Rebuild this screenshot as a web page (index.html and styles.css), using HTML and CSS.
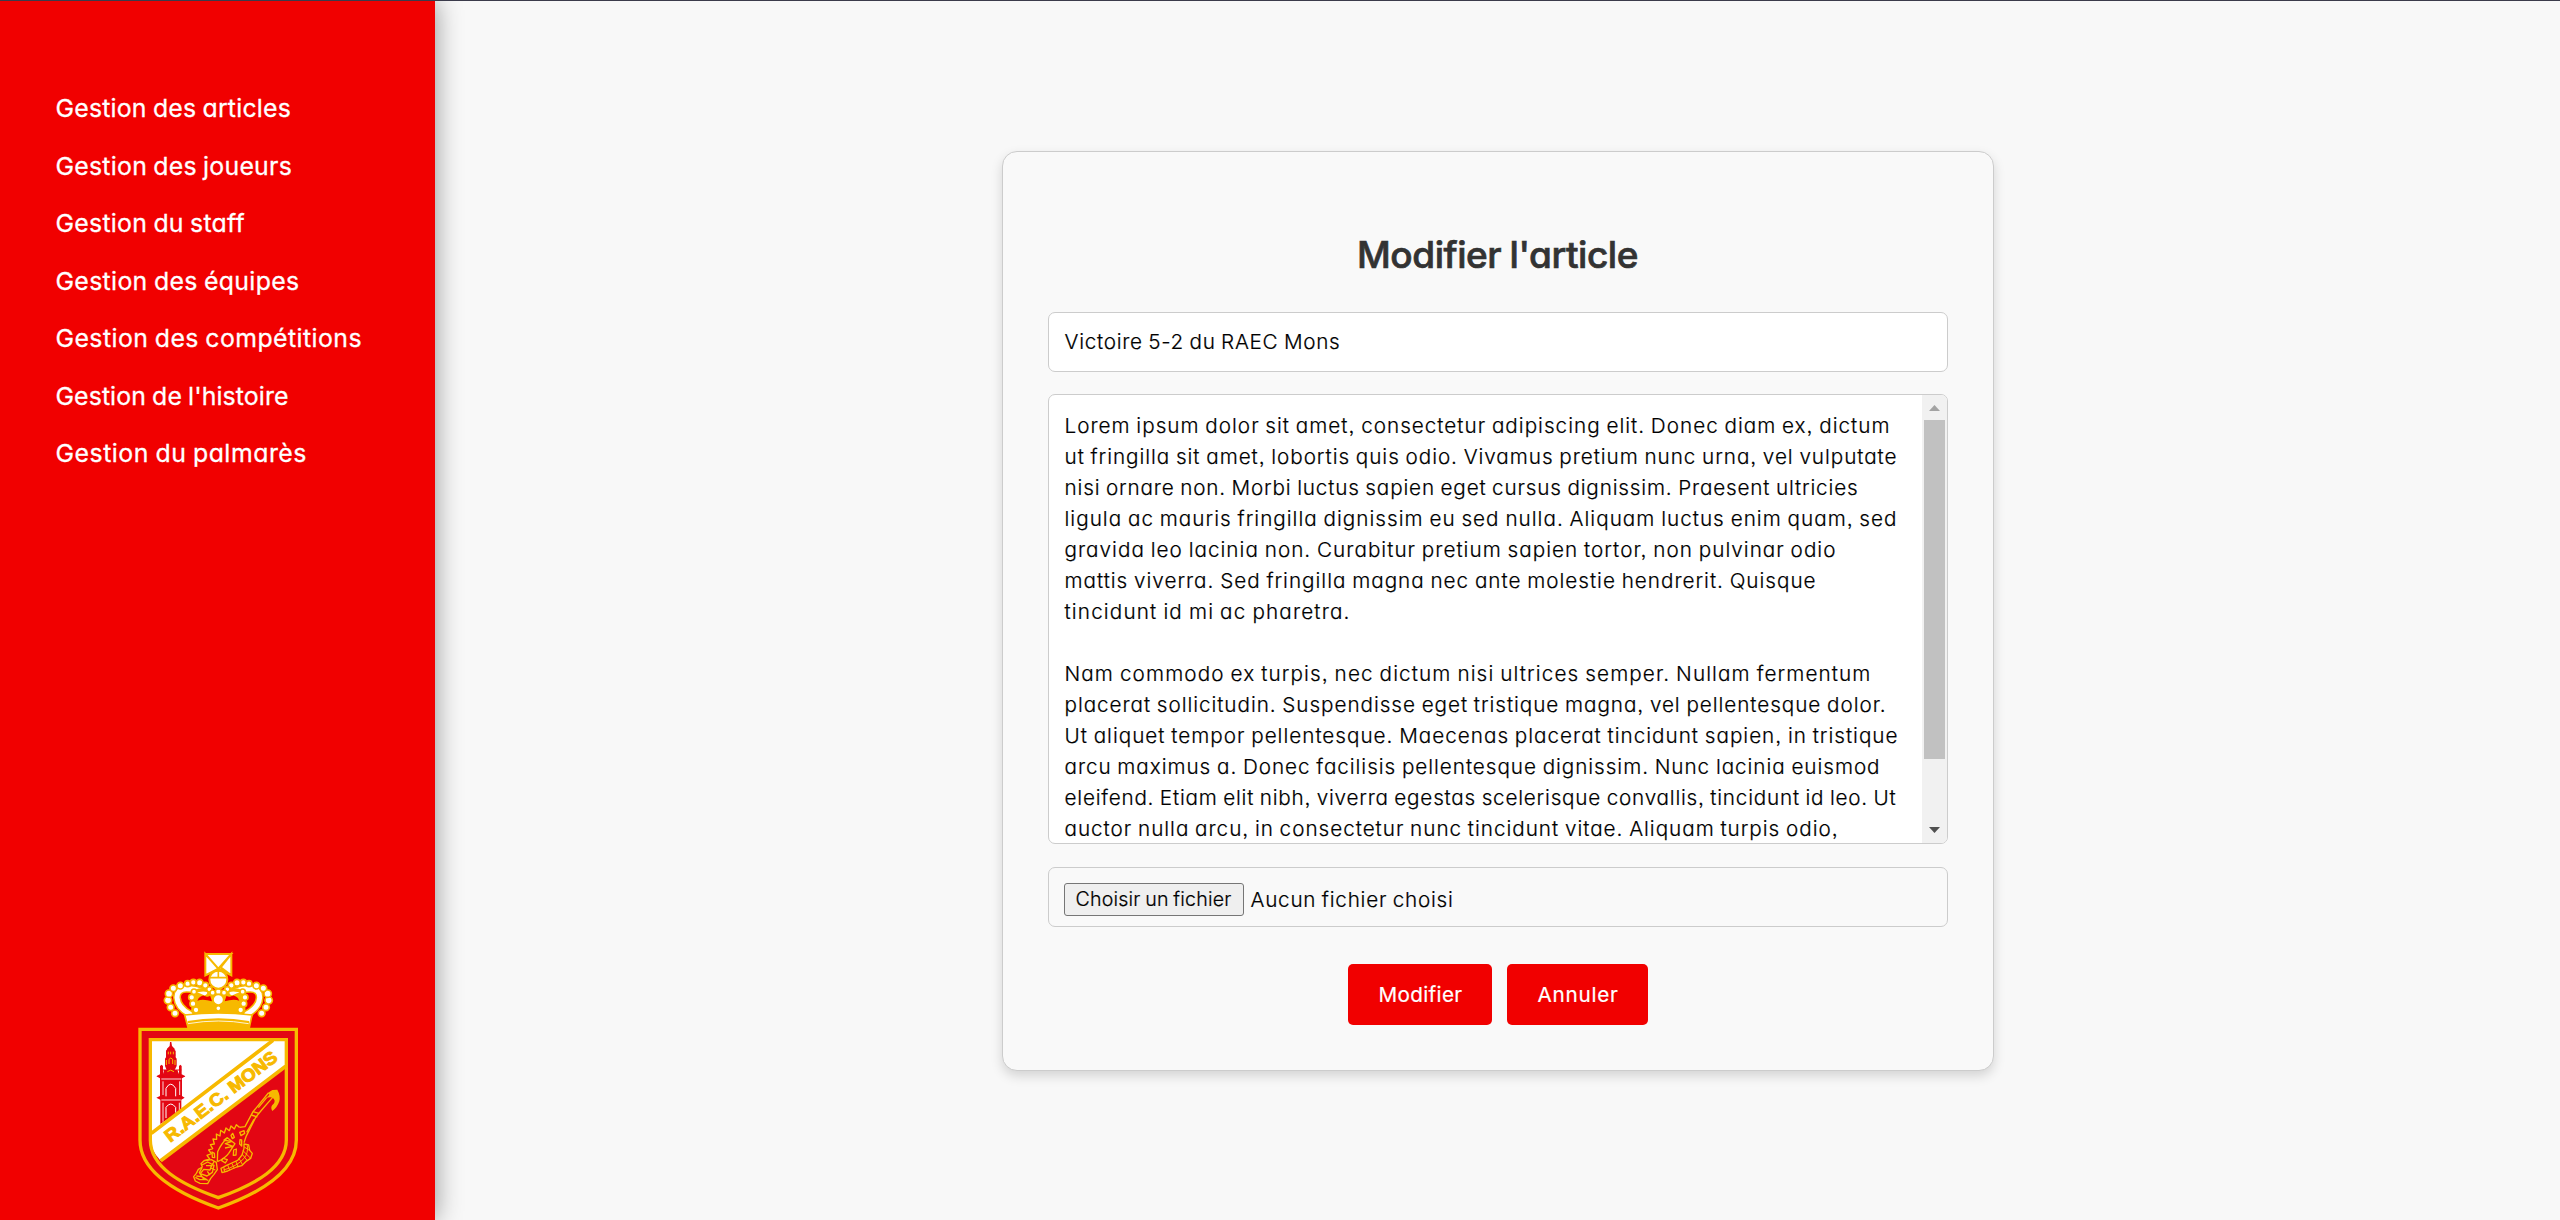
FILE: index.html
```html
<!DOCTYPE html>
<html lang="fr">
<head>
<meta charset="utf-8">
<title>Modifier l'article</title>
<link rel="stylesheet" href="styles.css">
</head>
<body>
<aside class="sidebar">
  <nav class="menu">
    <a class="menu-link"><span data-w="235.5">Gestion des articles</span></a>
    <a class="menu-link"><span data-w="236.5">Gestion des joueurs</span></a>
    <a class="menu-link"><span data-w="189.5">Gestion du staff</span></a>
    <a class="menu-link"><span data-w="244">Gestion des équipes</span></a>
    <a class="menu-link"><span data-w="306.5">Gestion des compétitions</span></a>
    <a class="menu-link"><span data-w="233">Gestion de l'histoire</span></a>
    <a class="menu-link"><span data-w="251.5">Gestion du palmarès</span></a>
  </nav>
  <svg class="crest" viewBox="0 0 600 840" width="200" height="280">
    <!-- crown -->
    <path d="M200 240Q170 190 200 160Q250 140 295 155Q345 140 390 160Q425 190 390 240Z" fill="#f7b900"/>
    <path d="M213 218C180 215 165 175 190 160Q222 145 215 185ZM377 218C410 215 425 175 400 160Q368 145 375 185Z" fill="#f00000"/>
    <path d="M232 182Q240 162 270 166L276 184Q250 176 232 182ZM358 182Q350 162 320 166L314 184Q340 176 358 182Z" fill="#f00000"/>
    <g fill="none" stroke-linecap="round">
      <path d="M209 222C160 195 160 145 200 146Q240 146 262 158M381 222C430 195 430 145 390 146Q350 146 328 158" stroke="#f7b900" stroke-width="24"/>
      <path d="M209 222C160 195 160 145 200 146Q230 146 254 158M381 222C430 195 430 145 390 146Q360 146 336 158" stroke="#fff" stroke-width="15"/>
      <path d="M226 208Q208 175 222 156Q270 135 295 180Q320 135 368 156Q382 175 364 208" stroke="#f7b900" stroke-width="10"/>
    </g>
    <g fill="#fff" stroke="#f7b900" stroke-width="5">
      <circle cx="165" cy="220" r="10"/><circle cx="152" cy="202" r="10"/><circle cx="144" cy="181" r="11"/><circle cx="147" cy="161" r="11"/><circle cx="160" cy="145" r="10"/><circle cx="181" cy="137" r="10"/><circle cx="203" cy="131" r="9"/><circle cx="220" cy="127" r="9"/><circle cx="239" cy="128" r="10"/><circle cx="256" cy="136" r="9"/><circle cx="268" cy="148" r="8"/>
      <circle cx="425" cy="220" r="10"/><circle cx="438" cy="202" r="10"/><circle cx="446" cy="181" r="11"/><circle cx="443" cy="161" r="11"/><circle cx="430" cy="145" r="10"/><circle cx="409" cy="137" r="10"/><circle cx="387" cy="131" r="9"/><circle cx="370" cy="127" r="9"/><circle cx="351" cy="128" r="10"/><circle cx="334" cy="136" r="9"/><circle cx="322" cy="148" r="8"/>
      <circle cx="228" cy="210" r="9"/><circle cx="219" cy="191" r="9"/><circle cx="215" cy="172" r="9"/><circle cx="222" cy="155" r="8"/>
      <circle cx="362" cy="210" r="9"/><circle cx="371" cy="191" r="9"/><circle cx="375" cy="172" r="9"/><circle cx="368" cy="155" r="8"/>
      <circle cx="295" cy="155" r="9"/><circle cx="295" cy="205" r="8"/><circle cx="278" cy="158" r="8"/><circle cx="312" cy="158" r="8"/>
      <circle cx="295" cy="179" r="16"/>
      <path d="M256 42H334L302 82L334 106L295 88L256 106V42ZM256 42L295 86L334 42V106L295 86L256 106Z" stroke-width="6"/>
      <circle cx="295" cy="119" r="27" stroke-width="6"/>
      <path d="M269 113H321M295 92V113" fill="none"/>
      <path d="M194 225Q295 213 396 225L388 262H204Z"/>
    </g>
    <path d="M203 243Q295 226 387 243L388 266H203Z" fill="#f7b900"/>
    <path d="M204 251Q295 235 386 251" fill="none" stroke="#fff" stroke-width="2.5"/>
    <!-- shield -->
    <path d="M60 268H529V600C529 690 430 756 295 804C160 756 60 690 60 600Z" fill="#e30613" stroke="#f7b900" stroke-width="10"/>
    <path d="M91 299H499V600C499 680 410 732 295 773C180 732 91 680 91 600Z" fill="#e30613"/>
    <path d="M91 299H499V378L122 662Q91 630 91 600Z" fill="#fff"/>
    <!-- belfry -->
    <g fill="#e30613">
      <path d="M150 306H154L156 318L164 326V333H167V352L170 356V378L164 390H172L177 402V378L181 374L185 378V403L196 409L186 415V468L194 473L184 479V510L121 552V479L109 473L120 468V415L109 409L120 403V378L125 374L129 378V402L132 390H140L135 378V356L138 352V333H141V326L149 318Z"/>
      <path d="M138 331H166M138 345H166M120 390H184M112 409H194" stroke="#e30613" stroke-width="3"/>
    </g>
    <path d="M145 335V343M152 335V343M160 335V343M147 372V358Q152 350 158 358V372M139 360V375M165 360V375M142 395Q152 386 162 395" fill="none" stroke="#f7b900" stroke-width="3"/>
    <path d="M124 417H184M124 480H182M129 424V465M179 424V465M129 488V545M178 488V510" fill="none" stroke="#fff" stroke-width="2.5"/>
    <path d="M138 469V445Q152 420 167 445V469M138 534V502Q152 482 167 502V518" fill="none" stroke="#fff" stroke-width="3"/>
    <path d="M94 580L459 301M122 662L497 379" fill="none" stroke="#f7b900" stroke-width="11"/>
    <text class="crest-name" transform="translate(151 608) rotate(-37.5)" textLength="410" lengthAdjust="spacingAndGlyphs">R.A.E.C. MONS</text>
    <!-- ornament -->
    <g fill="none" stroke="#f7b900" stroke-width="4" stroke-linejoin="round">
      <path d="M445 459L410 502L399 515L375 560L358 562M460 470L425 510L407 532L378 590L372 608"/>
      <path d="M399 515L417 520M394 525L412 531M440 473L415 503M402 538L380 577"/>
      <path d="M358 562L349 554L343 567L333 558L328 572L318 564L313 579L302 571L300 588L289 582L290 598L279 597L283 612L271 614L278 626L266 630L274 641L261 646L269 657L252 662"/>
      <path d="M292 665L293 635Q304 610 322 593L345 611L326 640Q315 655 292 665M322 593L312 600L334 605L316 611L339 619L315 624"/>
      <path d="M333 586L338 580L343 592L337 596ZM359 577L372 572L374 580L363 587ZM360 599L365 600L365 618L359 612ZM341 630L349 627L348 645L340 646ZM304 661L309 655L322 659L316 669ZM276 636L283 640L284 653L277 652Z"/>
      <path d="M372 612L386 615L389 631L397 640L392 655L377 665L365 677L350 681L336 687L323 693L306 698L303 685L320 676L335 669L353 661L366 645L372 625Z"/>
      <path d="M311 681L315 696M323 675L329 691M335 669L343 685M347 663L355 681M357 655L368 675M367 643L381 661M369 632L392 655M373 621L391 633M310 690Q350 680 372 655Q385 640 382 617" stroke-width="3"/>
      <path d="M252 662L243 671L247 681L235 688L229 700L221 710L226 723L240 730L263 731L272 715L282 703L292 689L289 667L274 659L262 661Z"/>
      <path d="M246 675L263 666L282 676L277 697L261 708L241 701L251 688L270 690L275 676L258 677M229 708L245 710L260 719L239 719L226 712M246 683L238 698L250 716L265 721M283 663L272 684L286 690M262 694L270 705"/>
    </g>
    <path d="M443 459L457 450L472 449Q482 467 478 484Q471 504 457 513Q449 500 461 491Q468 481 458 473Q448 470 438 475L448 464Z" fill="#f7b900"/>
    <path d="M91 299H499V600C499 680 410 732 295 773C180 732 91 680 91 600Z" fill="none" stroke="#f7b900" stroke-width="10"/>
  </svg>
</aside>
<main class="content">
  <form class="card">
    <h2 class="title"><span data-w="281">Modifier l'article</span></h2>
    <div class="field"><span data-w="276">Victoire 5-2 du RAEC Mons</span></div>
    <div class="field editor">
      <div class="editor-text">
        <p><span data-w="826">Lorem ipsum dolor sit amet, consectetur adipiscing elit. Donec diam ex, dictum</span></p>
        <p><span data-w="833">ut fringilla sit amet, lobortis quis odio. Vivamus pretium nunc urna, vel vulputate</span></p>
        <p><span data-w="794">nisi ornare non. Morbi luctus sapien eget cursus dignissim. Praesent ultricies</span></p>
        <p><span data-w="833">ligula ac mauris fringilla dignissim eu sed nulla. Aliquam luctus enim quam, sed</span></p>
        <p><span data-w="772">gravida leo lacinia non. Curabitur pretium sapien tortor, non pulvinar odio</span></p>
        <p><span data-w="752">mattis viverra. Sed fringilla magna nec ante molestie hendrerit. Quisque</span></p>
        <p><span data-w="286">tincidunt id mi ac pharetra.</span></p>
        <p>&nbsp;</p>
        <p><span data-w="807">Nam commodo ex turpis, nec dictum nisi ultrices semper. Nullam fermentum</span></p>
        <p><span data-w="822">placerat sollicitudin. Suspendisse eget tristique magna, vel pellentesque dolor.</span></p>
        <p><span data-w="834">Ut aliquet tempor pellentesque. Maecenas placerat tincidunt sapien, in tristique</span></p>
        <p><span data-w="816">arcu maximus a. Donec facilisis pellentesque dignissim. Nunc lacinia euismod</span></p>
        <p><span data-w="832">eleifend. Etiam elit nibh, viverra egestas scelerisque convallis, tincidunt id leo. Ut</span></p>
        <p><span data-w="774">auctor nulla arcu, in consectetur nunc tincidunt vitae. Aliquam turpis odio,</span></p>
      </div>
      <div class="scrollbar">
        <svg class="arrow" viewBox="0 0 25 25"><path d="M7 16L12.5 10L18 16Z" fill="#a3a3a3"/></svg>
        <div class="track"><div class="thumb"></div></div>
        <svg class="arrow" viewBox="0 0 25 25"><path d="M7 9L12.5 15L18 9Z" fill="#505050"/></svg>
      </div>
    </div>
    <div class="field file">
      <span class="file-button"><span data-w="156">Choisir un fichier</span></span>
      <span class="file-name"><span data-w="203">Aucun fichier choisi</span></span>
    </div>
    <div class="actions">
      <button type="button" class="btn"><span data-w="84">Modifier</span></button>
      <button type="button" class="btn"><span data-w="81">Annuler</span></button>
    </div>
  </form>
</main>
<script src="fit.js"></script>
</body>
</html>
```
FILE: styles.css
```css
* { box-sizing: border-box; }

body {
  margin: 0;
  height: 1220px;
  display: flex;
  overflow: hidden;
  border-top: 1px solid #3b3b4b;
  background: #f8f8f8;
  color: #000;
  font: 300 20.7px/31px Inter, "Open Sans", sans-serif;
  font-feature-settings: "cv11", "ss03";
  word-spacing: -1px;
  -webkit-text-stroke: 0.2px currentColor;
}

p, h2 { margin: 0; }

[data-w] { display: inline-block; white-space: nowrap; }

.sidebar {
  width: 435px;
  display: flex;
  flex-direction: column;
  justify-content: space-between;
  padding-top: 78px;
  background: #f10000;
  box-shadow: 0 0 25px rgba(0, 0, 0, 0.42);
}

.menu { display: flex; flex-direction: column; padding-left: 55.5px; }

.menu-link {
  height: 57.5px;
  line-height: 58px;
  color: #fff;
  font-size: 24.8px;
  font-weight: 400;
  -webkit-text-stroke-width: 0.3px;
}

.crest { display: block; margin-left: 120px; }

.crest-name {
  font: bold 53px "Liberation Sans", Arial, sans-serif;
  word-spacing: 0;
  -webkit-text-stroke: 0;
  fill: #f7b900;
  stroke: #f7b900;
  stroke-width: 3px;
}

.content {
  flex: 1;
  display: flex;
  justify-content: center;
  align-items: flex-start;
  padding-top: 150px;
}

.card {
  width: 992px;
  height: 920px;
  padding: 79px 45px 0;
  border: 1px solid #ccc;
  border-radius: 15px;
  background: #f9f9f9;
  box-shadow: 0 5px 12px rgba(0, 0, 0, 0.15);
}

.title {
  margin-bottom: 33px;
  height: 48px;
  line-height: 47px;
  text-align: center;
  color: #333;
  font-size: 37px;
  font-weight: 500;
  -webkit-text-stroke-width: 0.7px;
}

.field {
  height: 60px;
  margin-bottom: 22px;
  padding: 13px 15px 13px 16px;
  border: 1px solid #ccc;
  border-radius: 7px;
  background: #fff;
}

.editor {
  height: 450px;
  margin-bottom: 23px;
  padding: 0 0 0 16px;
  display: flex;
  justify-content: space-between;
  overflow: hidden;
}

.editor-text { padding-top: 15px; }
.editor-text p { height: 31px; }

.scrollbar { width: 25px; display: flex; flex-direction: column; background: #f1f1f1; }
.arrow { width: 25px; height: 25px; }
.track { flex: 1; }
.thumb { width: 21px; height: 339px; margin: 0 auto; background: #c1c1c1; }

.file {
  display: flex;
  align-items: flex-start;
  gap: 7px;
  margin-bottom: 37px;
  padding-left: 15px;
  background: transparent;
}

.file-button {
  width: 180px;
  height: 33px;
  margin-top: 2px;
  text-align: center;
  border: 1px solid #767676;
  border-radius: 3px;
  background: #efefef;
  font-size: 19.6px;
  line-height: 31px;
}

.file-name { padding-top: 3px; }

.actions { display: flex; justify-content: center; gap: 15px; }

.btn {
  height: 61px;
  padding: 0 29px 0 31px;
  border: 0;
  border-radius: 5px;
  background: #f10000;
  color: #fff;
  font: inherit;
  font-weight: 400;
  font-feature-settings: inherit;
}
```
FILE: fit.js
```js
// Tracks each label so that it fills its declared measure.
document.querySelectorAll("[data-w]").forEach(function (el) {
  var target = parseFloat(el.dataset.w);
  var natural = el.getBoundingClientRect().width;
  var spacing = (target - natural) / el.textContent.length;
  el.style.letterSpacing = spacing.toFixed(3) + "px";
});
```
